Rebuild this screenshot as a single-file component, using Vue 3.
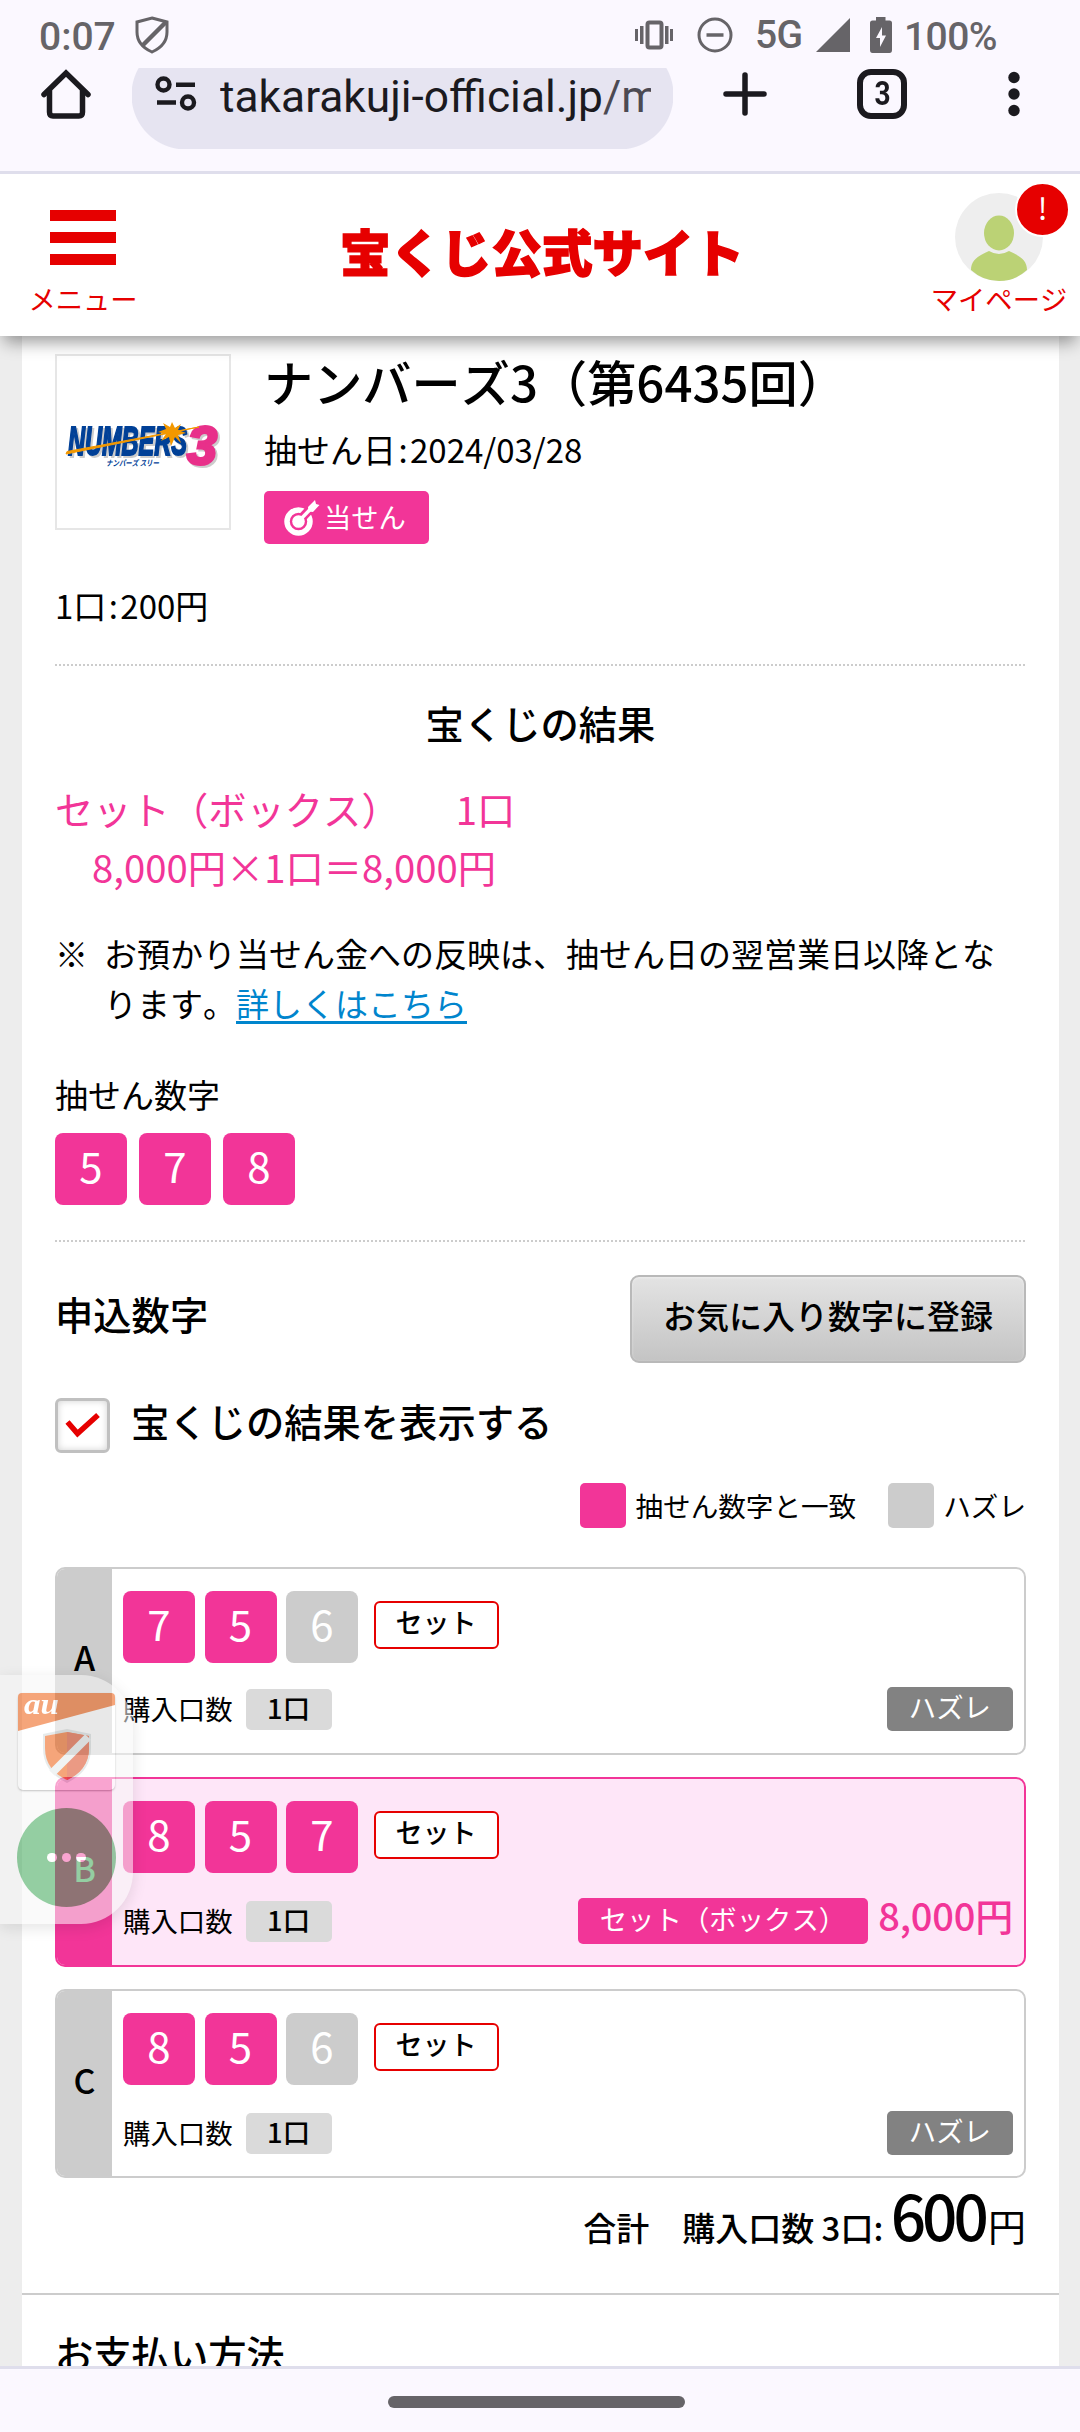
<script setup>
import { ref } from "vue";

const showResult = ref(true);

const drawn = [5, 7, 8];

const entries = [
  { id: "A", numbers: [7, 5, 6], count: 1, prize: null },
  { id: "B", numbers: [8, 5, 7], count: 1, prize: "8,000円" },
  { id: "C", numbers: [8, 5, 6], count: 1, prize: null },
];

const isHit = (num) => drawn.includes(num);

const toggleResult = () => {
  showResult.value = !showResult.value;
};
</script>

<template>
  <div class="screen">
    <div class="status">
      <span class="status__time">0:07</span>
      <svg class="status__shield" width="34" height="38" viewBox="0 0 34 38" fill="none" stroke="#666468" stroke-width="3">
        <path d="M17 2 L32 6 V16 C32 26 26 32 17 36 C8 32 2 26 2 16 V6 Z" />
        <path d="M31 6 L8 29" stroke-width="4.5" />
      </svg>
      <svg class="status__vibrate" width="38" height="30" viewBox="0 0 38 30" fill="#666468">
        <rect x="12.5" y="2.5" width="14" height="25" rx="2" fill="none" stroke="#666468" stroke-width="4" />
        <rect x="0" y="9" width="3" height="12" />
        <rect x="5" y="6" width="3.5" height="18" />
        <rect x="30" y="6" width="3.5" height="18" />
        <rect x="35" y="9" width="3" height="12" />
      </svg>
      <svg class="status__dnd" width="36" height="36" viewBox="0 0 36 36" fill="none" stroke="#666468">
        <circle cx="18" cy="18" r="16" stroke-width="3" />
        <path d="M9.5 18 H26.5" stroke-width="3.5" />
      </svg>
      <span class="status__net">5G</span>
      <svg class="status__signal" width="34" height="34" viewBox="0 0 34 34" fill="#666468">
        <path d="M34 0 V34 H0 Z" />
      </svg>
      <svg class="status__battery" width="22" height="36" viewBox="0 0 22 36" fill="#666468">
        <path d="M6 0 H15.500 V3.500 H19.500 Q22 3.500 22 6 V33 Q22 36 19.500 36 H2.500 Q0 36 0 33 V6 Q0 3.500 2.500 3.500 H6 Z" />
        <path d="M12 10 L6 21 H10 V30 L16 18.500 H12 Z" fill="#fbf8ff" />
      </svg>
      <span class="status__percent">100%</span>
    </div>

    <div class="toolbar">
      <svg class="toolbar__home" width="50" height="50" viewBox="0 0 50 50" fill="none" stroke="#1b1a1f" stroke-width="5.500" stroke-linecap="round" stroke-linejoin="round">
        <path d="M3 25.500 L25 4 L47 25.500" stroke-linejoin="miter" />
        <path d="M8.500 22 V43 Q8.500 47 12 47 H38 Q41.500 47 41.500 43 V22" />
      </svg>
      <div class="toolbar__url">
        <svg width="42" height="36" viewBox="0 0 42 36" fill="none" stroke="#1b1a1f" stroke-width="4.400">
          <circle cx="8.500" cy="8.500" r="6" />
          <path d="M21 8.700 H40 M2 26.500 H21" />
          <circle cx="33" cy="26.500" r="6" />
        </svg>
        <span class="toolbar__address">takarakuji-official.jp<i>/m</i></span>
      </div>
      <svg class="toolbar__plus" width="44" height="44" viewBox="0 0 44 44" stroke="#1b1a1f" stroke-width="5.500" stroke-linecap="round">
        <path d="M22 3 V41 M3 22 H41" />
      </svg>
      <div class="toolbar__tabs"><span>3</span></div>
      <svg class="toolbar__more" width="12" height="46" viewBox="0 0 12 46" fill="#1b1a1f">
        <circle cx="6" cy="6.500" r="5.700" />
        <circle cx="6" cy="23" r="5.700" />
        <circle cx="6" cy="39.500" r="5.700" />
      </svg>
    </div>

    <header class="header">
      <div class="header__menu">
        <div class="header__bars"><b></b><b></b><b></b></div>
        <div class="header__label">メニュー</div>
      </div>
      <div class="header__logo">宝くじ公式サイト</div>
      <div class="header__mypage">
        <svg width="88" height="88" viewBox="0 0 88 88">
          <circle cx="44" cy="44" r="44" fill="#eee" />
          <ellipse cx="44" cy="40" rx="15" ry="17.500" fill="#bbd275" />
          <path d="M16 77 C16 67 23 63 34 58 Q44 64 54 58 C65 63 72 67 72 77 Q60 88 44 88 Q28 88 16 77 Z" fill="#bbd275" />
        </svg>
        <div class="header__alert">!</div>
        <div class="header__label">マイページ</div>
      </div>
    </header>

    <main class="page">
      <section class="sheet">
        <div class="game">
          <div class="game__logo">
            <svg width="172" height="172" viewBox="0 0 172 172">
              <g class="game__wordmark">
                <text x="11" y="98.500" font-size="41" fill="#004097" stroke="#004097" stroke-width="2" textLength="119" lengthAdjust="spacingAndGlyphs">NUMBERS</text>
                <text x="130" y="107.500" font-size="54" fill="#e8308a" stroke="#e8308a" stroke-width="3">3</text>
              </g>
              <path d="M9 98 L142 71 L10 95.500 Z" fill="#f39800" stroke="#f39800" />
              <path d="M115 66 L118 72 L124 68 L121 74 L129 77 L121 79 L124 87 L118 81 L114 90 L112 81 L104 85 L109 78 L101 76 L109 73 L106 67 L113 71 Z" fill="#f39800" />
              <text x="49" y="109.500" font-family="'Noto Sans CJK JP', sans-serif" font-weight="bold" font-style="italic" font-size="8" fill="#004097" textLength="53" lengthAdjust="spacingAndGlyphs">ナンパーズ スリー</text>
            </svg>
          </div>
          <div class="game__info">
            <h1 class="game__title">ナンバーズ3（第6435回）</h1>
            <div class="game__date">抽せん日<i>:</i>2024/03/28</div>
            <div class="game__badge">
              <svg width="36" height="36" viewBox="0 0 36 36" fill="none">
                <circle cx="14.500" cy="21.500" r="11.500" stroke="#fff" stroke-width="5.500" />
                <path d="M14.500 21.500 L30 5" stroke="#f23598" stroke-width="9" />
                <circle cx="14.500" cy="21.500" r="6.300" fill="#fff" />
                <path d="M14.500 21.500 L28 7.500" stroke="#fff" stroke-width="3.500" />
                <path d="M24 7 L31 0 L32 4 L35.500 5 L29 12 L24.500 11.500 Z" fill="#fff" />
              </svg>
              <span>当せん</span>
            </div>
          </div>
        </div>
        <div class="unit">1口<i>:</i>200円</div>
        <div class="dotted"></div>

        <h2 class="result-title">宝くじの結果</h2>
        <div class="win">
          <div class="win__row"><span>セット（ボックス）</span><span class="win__count">1口</span></div>
          <div class="win__row win__row--calc">8,000円×1口＝8,000円</div>
        </div>
        <div class="note">
          <span class="note__mark">※</span>
          <p class="note__text">お預かり当せん金への反映は、抽せん日の翌営業日以降となります。<a>詳しくはこちら</a></p>
        </div>

        <div class="drawn-label">抽せん数字</div>
        <div class="drawn">
          <span v-for="num in drawn" :key="num" class="num num--hit">{{ num }}</span>
        </div>
        <div class="dotted dotted--second"></div>

        <div class="entry-head">
          <h2 class="entry-head__title">申込数字</h2>
          <button class="entry-head__btn">お気に入り数字に登録</button>
        </div>
        <div class="toggle" @click="toggleResult">
          <div class="toggle__box">
            <svg v-if="showResult" width="36" height="28" viewBox="0 0 36 28" fill="none" stroke="#e60000" stroke-width="5.500">
              <path d="M2.500 10 L12.500 21.500 L33 3" />
            </svg>
          </div>
          <span>宝くじの結果を表示する</span>
        </div>
        <div class="legend">
          <b class="legend__hit"></b><span>抽せん数字と一致</span>
          <b class="legend__miss"></b><span>ハズレ</span>
        </div>

        <div
          v-for="entry in entries"
          :key="entry.id"
          class="entry"
          :class="{ 'entry--win': entry.prize }"
        >
          <div class="entry__id">{{ entry.id }}</div>
          <div class="entry__body">
            <div class="entry__numbers">
              <span
                v-for="num in entry.numbers"
                :key="num"
                class="num"
                :class="{ 'num--hit': isHit(num) }"
              >{{ num }}</span>
              <span class="entry__type">セット</span>
            </div>
            <div class="entry__foot">
              <span class="entry__label">購入口数</span>
              <span class="entry__count">{{ entry.count }}口</span>
              <template v-if="entry.prize">
                <span class="entry__result entry__result--win">セット（ボックス）</span>
                <span class="entry__prize">{{ entry.prize }}</span>
              </template>
              <span v-else class="entry__result">ハズレ</span>
            </div>
          </div>
        </div>

        <div class="total">合計　購入口数 3口: <strong>600</strong><span>円</span></div>
        <div class="payment">お支払い方法</div>
      </section>
    </main>

    <div class="navbar"><div class="navbar__handle"></div></div>

    <div class="floating">
      <div class="floating__app">
        <svg width="97" height="97" viewBox="0 0 97 97">
          <path d="M0 4 Q0 0 4 0 H93 Q97 0 97 4 V12 L0 38 Z" fill="#ee5c0e" />
          <text x="6" y="21" font-family="'Liberation Serif', serif" font-weight="bold" font-style="italic" font-size="29" fill="#fff" textLength="35" lengthAdjust="spacingAndGlyphs">au</text>
          <path d="M49 36 L73 41 V55 C73 73 63 83 49 90 C35 83 25 73 25 55 V41 Z" fill="#d5dcdc" />
          <path d="M49 39 L71 43 V55 C71 71 62 81 49 87 C36 81 27 71 27 55 V43 Z" fill="#ee5c0e" />
          <path d="M49 39 L71 43 V55 C71 71 62 81 49 87 Z" fill="#dc4820" />
          <path d="M70 44 L34 80" stroke="#e4eaea" stroke-width="8" />
        </svg>
      </div>
      <div class="floating__more"><b></b><b></b><b></b></div>
    </div>
  </div>
</template>

<style>
body {
  margin: 0;
  background: #ededed;
}
</style>

<style scoped>
.screen {
  position: relative;
  width: 1080px;
  height: 2432px;
  display: flex;
  flex-direction: column;
  overflow: hidden;
  background: #ededed;
  color: #000;
  font-family: "Noto Sans CJK JP", sans-serif;
  font-kerning: none;
}

i {
  font-style: normal;
}

.status {
  flex: none;
  position: relative;
  z-index: 3;
  height: 68px;
  box-sizing: border-box;
  padding-left: 39px;
  display: flex;
  align-items: flex-start;
  background: #fbf8ff;
  color: #666468;
  font: 500 39px/46px Roboto, sans-serif;
}

.status span {
  flex: none;
  white-space: nowrap;
}

.status__time {
  width: 96px;
  padding-top: 14px;
}

.status__shield {
  margin-top: 16px;
}

.status__vibrate {
  margin: 20px 0 0 466px;
}

.status__dnd {
  margin: 17px 0 0 24px;
}

.status__net {
  width: 61px;
  padding: 12px 0 0 22px;
  letter-spacing: -0.7px;
}

.status__signal {
  margin-top: 18px;
}

.status__battery {
  margin: 17px 0 0 20px;
}

.status__percent {
  padding: 14px 0 0 12px;
  letter-spacing: -0.6px;
}

.toolbar {
  flex: none;
  position: relative;
  z-index: 3;
  height: 106px;
  box-sizing: border-box;
  border-bottom: 3px solid #dfdeec;
  padding-left: 41px;
  display: flex;
  align-items: flex-start;
  background: #fbf8ff;
}

.toolbar svg {
  flex: none;
}

.toolbar__home {
  margin-top: 1px;
}

.toolbar__url {
  width: 541px;
  height: 81px;
  box-sizing: border-box;
  margin-left: 41px;
  padding: 8px 0 0 23px;
  display: flex;
  overflow: hidden;
  background: radial-gradient(circle at 54px 27px, #e6e4f1 54px, transparent 55px) no-repeat left / 54px 100%,
    radial-gradient(circle at 0 27px, #e6e4f1 54px, transparent 55px) no-repeat right / 54px 100%,
    linear-gradient(#e6e4f1, #e6e4f1) no-repeat center / 434px 100%;
}

.toolbar__address {
  width: 431px;
  margin: -6px 0 0 23px;
  overflow: hidden;
  white-space: nowrap;
  color: #1b1a1f;
  font: 400 44.3px/54px Roboto, sans-serif;
}

.toolbar__address i {
  color: #4c4a53;
}

.toolbar__plus {
  margin: 4px 0 0 50px;
}

.toolbar__tabs {
  width: 50px;
  height: 50px;
  box-sizing: border-box;
  margin: 1px 0 0 90px;
  border: 6px solid #1b1a1f;
  border-radius: 14px;
  text-align: center;
  color: #1b1a1f;
  font: 700 33px/37px Roboto, sans-serif;
}

.toolbar__tabs span {
  display: inline-block;
  transform: scaleX(0.85);
}

.toolbar__more {
  margin: 3px 0 0 101px;
}

.header {
  flex: none;
  position: relative;
  z-index: 2;
  height: 162px;
  display: flex;
  justify-content: space-between;
  background: #fff;
  box-shadow: 0 10px 16px -4px rgba(0, 0, 0, 0.4);
  color: #e60000;
}

.header__menu {
  width: 166px;
  padding-top: 36px;
}

.header__bars {
  width: 66px;
  height: 55px;
  margin: 0 auto;
  display: flex;
  flex-direction: column;
  justify-content: space-between;
}

.header__bars b {
  height: 11px;
  background: #e60000;
}

.header__label {
  text-align: center;
  white-space: nowrap;
  font-size: 27.3px;
  line-height: 36px;
}

.header__menu .header__label {
  margin-top: 15px;
}

.header__logo {
  padding-top: 42px;
  font-size: 50.5px;
  font-weight: 900;
  line-height: 68px;
  -webkit-text-stroke: 1.5px #e60000;
}

.header__mypage {
  position: relative;
  width: 162px;
  padding-top: 19px;
  text-align: center;
}

.header__mypage svg {
  display: block;
  margin: 0 auto;
}

.header__mypage .header__label {
  margin-top: -1px;
}

.header__alert {
  position: absolute;
  top: 8px;
  left: 97px;
  width: 51px;
  height: 51px;
  border: 2px solid #fff;
  border-radius: 50%;
  background: #e60000;
  color: #fff;
  font-size: 30px;
  line-height: 46px;
}

.page {
  flex: none;
  height: 2030px;
  box-sizing: border-box;
  padding: 0 21px 0 22px;
  overflow: hidden;
}

.sheet {
  padding: 18px 33px 0;
  background: #fff;
  font-size: 33px;
  line-height: 40px;
}

.game {
  display: flex;
  gap: 33px;
  height: 190px;
}

.game__logo {
  width: 172px;
  height: 172px;
  border: 2px solid #e6e6e6;
}

.game__wordmark {
  font-family: "Liberation Sans", sans-serif;
  font-weight: bold;
  font-style: italic;
  filter: drop-shadow(2px 2px 0 #ccc);
}

.game__title {
  margin: 0;
  padding-top: 2px;
  font-size: 49.2px;
  font-weight: 500;
  line-height: 50px;
}

.game__date {
  margin-top: 23px;
}

.game__date i,
.unit i {
  display: inline-block;
  width: 14px;
  text-align: center;
}

.game__badge {
  width: 165px;
  height: 53px;
  box-sizing: border-box;
  margin-top: 22px;
  padding-left: 20px;
  border-radius: 5px;
  display: flex;
  align-items: center;
  gap: 4px;
  background: #f23598;
  color: #fff;
  font-size: 27.3px;
}

.game__badge span {
  margin-top: -3px;
}

.unit {
  margin-top: 41px;
}

.dotted {
  height: 2px;
  margin-top: 39px;
  background: repeating-linear-gradient(90deg, #ccc 0 2px, #fff 2px 4px);
}

.dotted--second {
  margin-top: 35px;
}

.result-title {
  margin: 32px 0 0;
  text-align: center;
  font-size: 38.3px;
  font-weight: 500;
  line-height: 50px;
}

.win {
  margin-top: 32px;
  color: #f23598;
  font-size: 38.3px;
  line-height: 58px;
}

.win__row {
  display: flex;
}

.win__row--calc {
  padding-left: 37px;
}

.win__count {
  margin-left: 56px;
}

.note {
  display: flex;
  margin-top: 32px;
  line-height: 50px;
}

.note__mark {
  width: 49px;
}

.note__text {
  flex: 1;
  margin: 0;
}

.note__text a {
  color: #0085cd;
  text-decoration: underline;
  text-decoration-thickness: 3px;
  text-underline-offset: 4px;
}

.drawn-label {
  margin-top: 46px;
}

.drawn {
  display: flex;
  gap: 12px;
  margin-top: 19px;
}

.num {
  width: 72px;
  height: 72px;
  border-radius: 8px;
  background: #ccc;
  color: #fff;
  text-align: center;
  font-size: 42px;
  line-height: 64px;
}

.num--hit {
  background: #f23598;
}

.entry-head {
  display: flex;
  justify-content: space-between;
  height: 88px;
  margin-top: 33px;
}

.entry-head__title {
  margin: 0;
  font-size: 38.3px;
  font-weight: 500;
  line-height: 78px;
}

.entry-head__btn {
  width: 396px;
  padding: 0 0 9px;
  border: 2px solid #b9b9b9;
  border-radius: 9px;
  background: linear-gradient(#e3e3e3, #c4c4c4);
  box-shadow: inset 0 1px 3px rgba(255, 255, 255, 0.4);
  color: #000;
  font: 500 33px/40px "Noto Sans CJK JP", sans-serif;
}

.toggle {
  display: flex;
  gap: 21px;
  height: 55px;
  margin-top: 35px;
  font-size: 38.3px;
  font-weight: 500;
  line-height: 45px;
}

.toggle__box {
  width: 49px;
  height: 49px;
  border: 3px solid #c0c0c0;
  border-radius: 6px;
  display: flex;
  align-items: center;
  justify-content: center;
  box-shadow: inset 0 0 7px rgba(0, 0, 0, 0.18);
}

.legend {
  display: flex;
  justify-content: flex-end;
  margin-top: 30px;
  font-size: 27.6px;
  line-height: 45px;
}

.legend b {
  width: 46px;
  height: 45px;
  margin-right: 9px;
  border-radius: 5px;
}

.legend__hit {
  background: #f23598;
}

.legend b.legend__miss {
  margin-left: 32px;
  background: #ccc;
}

.entry {
  display: flex;
  box-sizing: border-box;
  height: 189px;
  margin-top: 22px;
  border: 2px solid #ccc;
  border-radius: 10px;
  overflow: hidden;
  background: #fff;
}

.legend + .entry {
  height: 188px;
  margin-top: 39px;
}

.entry--win {
  height: 190px;
  border-color: #f23598;
  background: #fee6f8;
}

.entry__id {
  width: 55px;
  background: #ccc;
  text-align: center;
  font-size: 34px;
  font-weight: 500;
  line-height: 178px;
}

.legend + .entry .entry__id {
  line-height: 175px;
}

.entry--win .entry__id {
  background: #f23598;
  color: #fff;
}

.entry__body {
  flex: 1;
  padding: 22px 11px 0;
}

.entry__numbers {
  display: flex;
  gap: 9.5px;
  height: 72px;
}

.entry__type {
  width: 121px;
  height: 44px;
  margin: 10px 0 0 6px;
  border: 2px solid #e60000;
  border-radius: 6px;
  background: #fff;
  text-align: center;
  font-size: 27px;
  font-weight: 500;
  line-height: 38px;
}

.entry__foot {
  display: flex;
  align-items: center;
  height: 48px;
  margin-top: 24px;
  font-size: 27.4px;
}

.legend + .entry .entry__foot {
  margin-top: 22px;
}

.entry__label {
  padding-bottom: 2px;
}

.entry__count {
  width: 86px;
  height: 41px;
  margin-left: 13px;
  border-radius: 5px;
  background: #dadada;
  text-align: center;
  font-weight: 500;
  line-height: 36px;
}

.entry__result {
  box-sizing: border-box;
  height: 44px;
  margin-left: auto;
  padding: 0 22px;
  border-radius: 5px;
  background: #828282;
  color: #fff;
  line-height: 38px;
}

.entry__result--win {
  height: 46px;
  background: #f23598;
  line-height: 40px;
}

.entry__prize {
  margin: -12px 0 0 10px;
  color: #f23598;
  font-size: 38px;
  font-weight: 500;
  letter-spacing: -0.2px;
}

.total {
  height: 115px;
  text-align: right;
  white-space: pre;
  font-weight: 500;
  line-height: 72px;
}

.total strong {
  font-size: 62px;
  font-weight: 500;
  letter-spacing: -3.9px;
}

.total span {
  margin-left: 3px;
  font-size: 38px;
  font-weight: 400;
}

.payment {
  margin: 0 -33px;
  padding: 33px 33px 0;
  border-top: 2px solid #ccc;
  font-size: 38.3px;
  font-weight: 500;
  line-height: 50px;
}

.navbar {
  flex: none;
  position: relative;
  z-index: 3;
  box-sizing: border-box;
  height: 66px;
  padding-top: 27px;
  border-top: 3px solid #dfdeec;
  background: #fbf8ff;
}

.navbar__handle {
  width: 297px;
  height: 12px;
  margin-left: 388px;
  border-radius: 6px;
  background: #666468;
}

.floating {
  position: absolute;
  z-index: 4;
  top: 1675px;
  left: 0;
  width: 133px;
  height: 249px;
  box-sizing: border-box;
  padding: 18px 0 0 18px;
  border-radius: 0 52px 52px 0;
  background: #f7f7f7;
  box-shadow: 0 4px 16px rgba(0, 0, 0, 0.2);
  opacity: 0.55;
}

.floating__app {
  width: 97px;
  height: 97px;
  border-radius: 5px;
  background: #fff;
  box-shadow: 0 1px 2px rgba(0, 0, 0, 0.4);
}

.floating__more {
  width: 99px;
  height: 99px;
  margin: 18px 0 0 -1px;
  border-radius: 50%;
  display: flex;
  align-items: center;
  justify-content: center;
  gap: 5px;
  background: #3ea757;
}

.floating__more b {
  width: 9.5px;
  height: 9.5px;
  border-radius: 50%;
  background: #fff;
}
</style>
